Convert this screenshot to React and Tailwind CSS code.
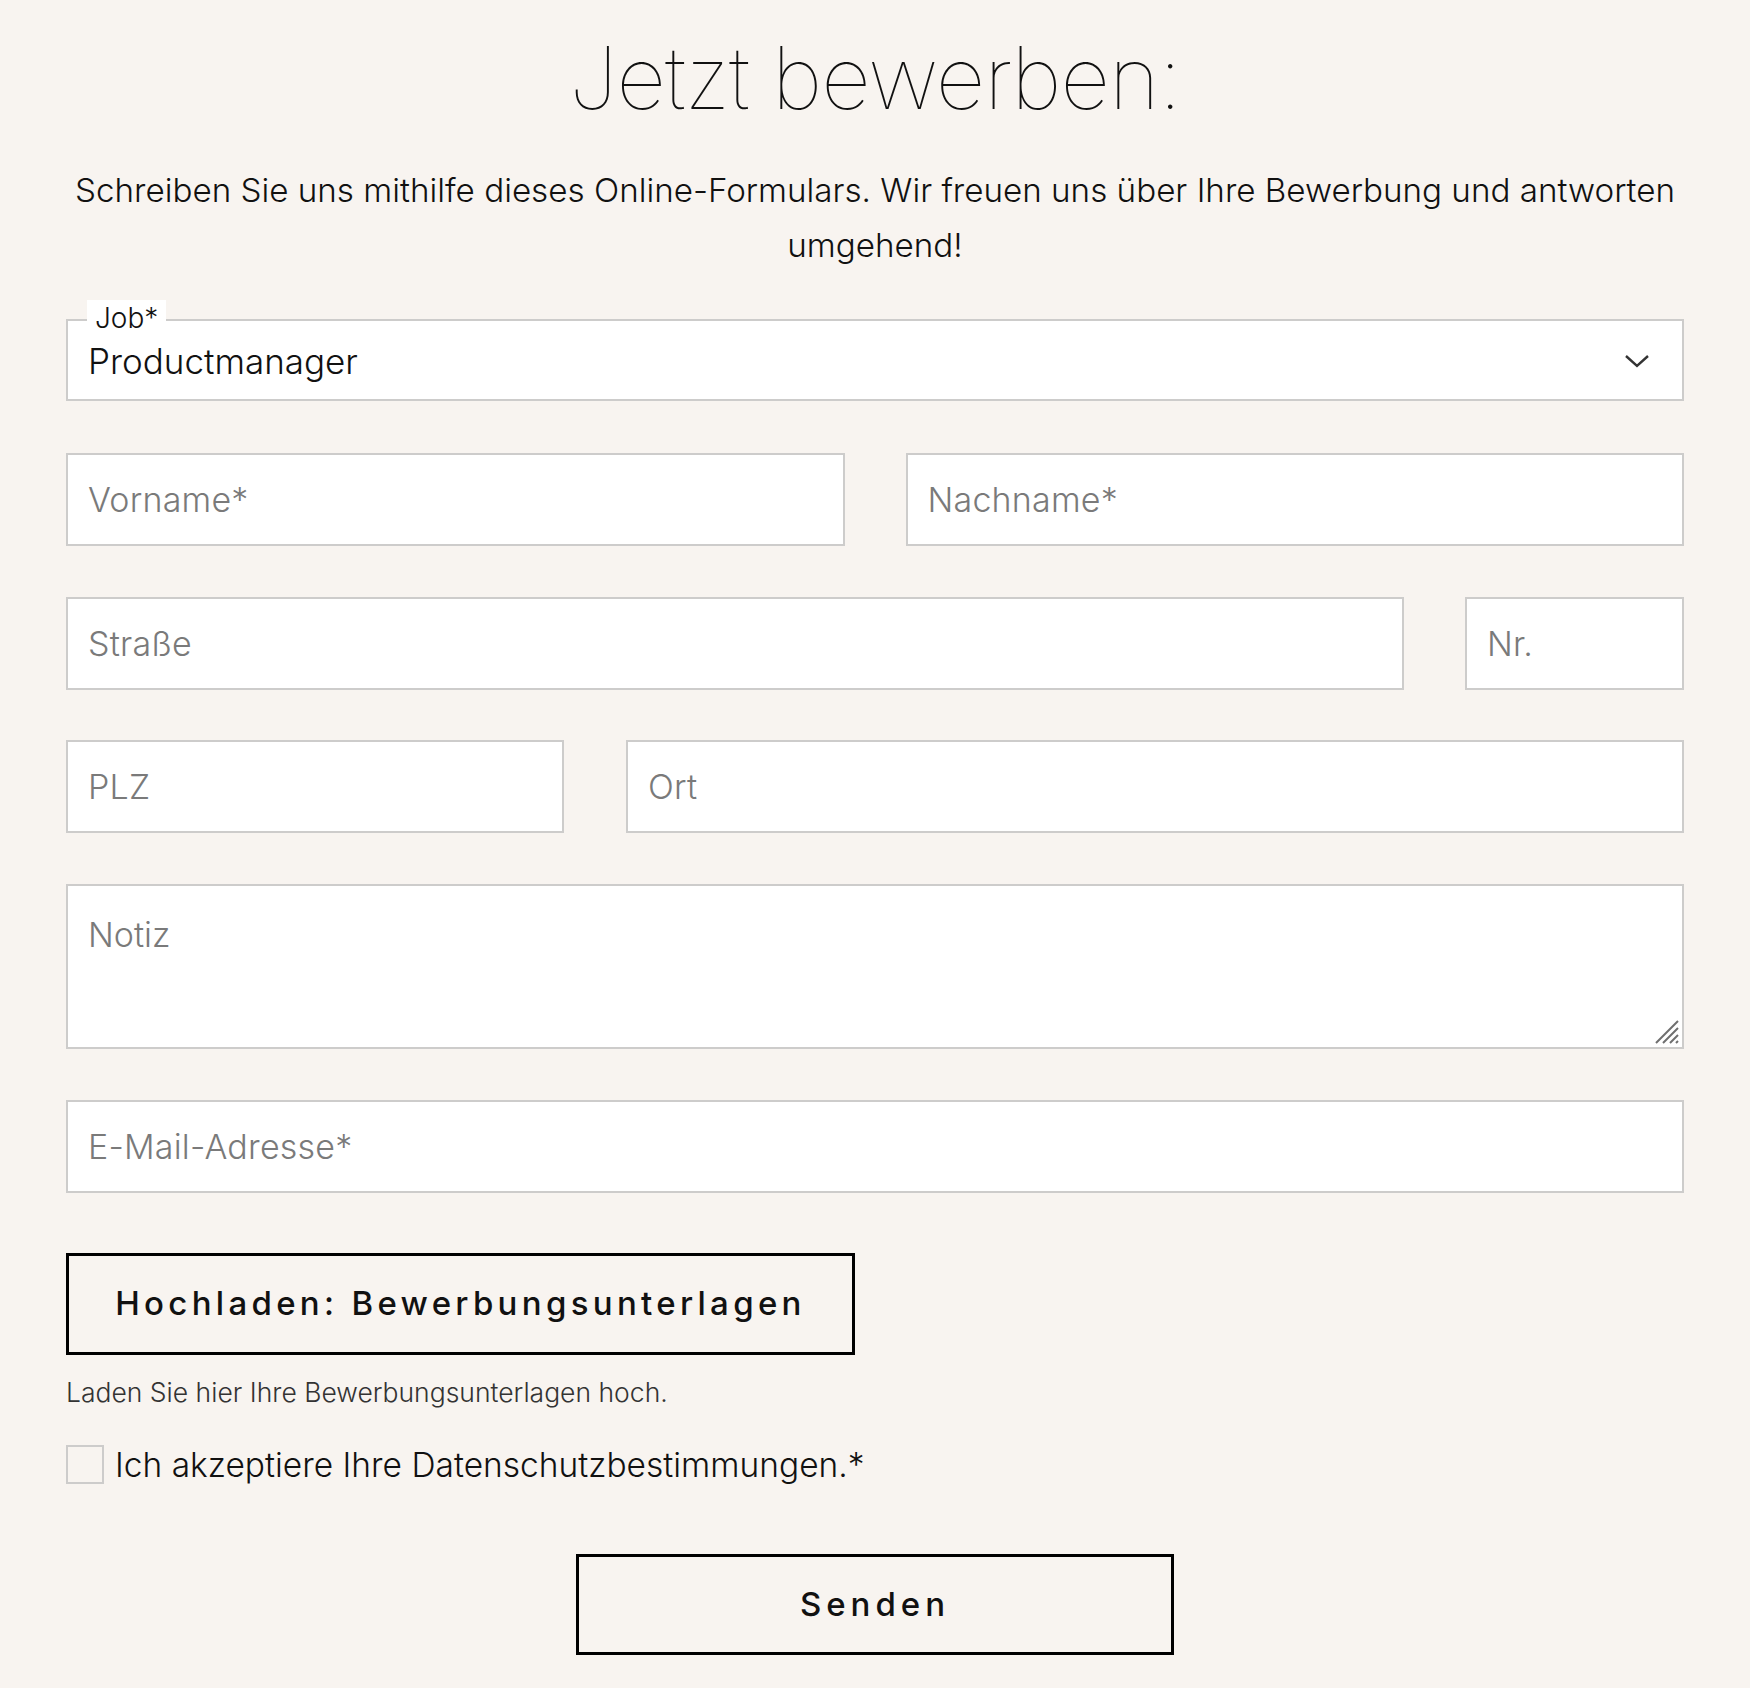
import React from "react";

const font = { fontFamily: "Inter, 'Noto Sans', sans-serif" };

function Field({ placeholder, className = "" }) {
  return (
    <div className={"h-[93px] border-2 border-[#cdcccb] bg-white flex items-center px-[20px] " + className}>
      <span className="text-[34px] font-light text-[#7a7a7a] tracking-[0.2px]">{placeholder}</span>
    </div>
  );
}

export default function App() {
  return (
    <div className="min-h-[1688px] w-full bg-[#f8f4f0] text-[#111]" style={font}>
      <div className="px-[66px] pt-[26px] pb-[34px] flex flex-col">
        <h1 className="text-center text-[86.5px] font-thin leading-[104px] tracking-[-1px]">Jetzt bewerben:</h1>
        <p className="mt-[33px] text-center text-[33.2px] font-light leading-[55px]">
          Schreiben Sie uns mithilfe dieses Online-Formulars. Wir freuen uns über Ihre Bewerbung und antworten umgehend!
        </p>

        <div className="mt-[46px] relative">
          <div className="absolute left-[21px] top-[-19px] bg-white px-[8px] h-[21px] flex items-start">
            <span className="text-[28px] font-light leading-[36px]">Job*</span>
          </div>
          <div className="h-[82px] border-2 border-[#cdcccb] bg-white flex items-center justify-between pl-[20px] pr-[32px] pt-[2px]">
            <span className="text-[35px] font-light">Productmanager</span>
            <svg width="26" height="16" viewBox="0 0 26 16" fill="none" stroke="#333" strokeWidth="2.4">
              <path d="M2 3 L13 13 L24 3" />
            </svg>
          </div>
        </div>

        <div className="mt-[52px] grid grid-cols-2 gap-[61px]">
          <Field placeholder="Vorname*" />
          <Field placeholder="Nachname*" />
        </div>

        <div className="mt-[51px] flex gap-[61px]">
          <Field placeholder="Straße" className="flex-1" />
          <Field placeholder="Nr." className="w-[219px]" />
        </div>

        <div className="mt-[50px] flex gap-[62px]">
          <Field placeholder="PLZ" className="w-[498px]" />
          <Field placeholder="Ort" className="flex-1" />
        </div>

        <div className="mt-[51px] relative h-[165px] border-2 border-[#cdcccb] bg-white px-[20px] pt-[23px]">
          <span className="text-[34px] font-light text-[#7a7a7a]">Notiz</span>
          <svg className="absolute right-[2px] bottom-[2px]" width="26" height="26" viewBox="0 0 26 26" stroke="#6f6f6f" strokeWidth="2">
            <path d="M2 24 L24 2 M9 24 L24 9 M16 24 L24 16 M22 24 L24 22" />
          </svg>
        </div>

        <Field placeholder="E-Mail-Adresse*" className="mt-[51px]" />

        <button className="mt-[60px] w-[789px] h-[102px] border-[3px] border-black flex items-center justify-center">
          <span className="text-[33px] font-medium tracking-[4.3px]">Hochladen: Bewerbungsunterlagen</span>
        </button>

        <p className="mt-[18px] text-[26.5px] font-light text-[#333]">Laden Sie hier Ihre Bewerbungsunterlagen hoch.</p>

        <label className="mt-[27px] flex items-center gap-[11px]">
          <span className="w-[38px] h-[39px] border-2 border-[#cdcccb] bg-[#f8f4f0]"></span>
          <span className="text-[33.5px] font-light">Ich akzeptiere Ihre Datenschutzbestimmungen.*</span>
        </label>

        <div className="mt-[64px] flex justify-center">
          <button className="w-[598px] h-[101px] border-[3px] border-black flex items-center justify-center">
            <span className="text-[33px] font-medium tracking-[5px]">Senden</span>
          </button>
        </div>
      </div>
    </div>
  );
}
